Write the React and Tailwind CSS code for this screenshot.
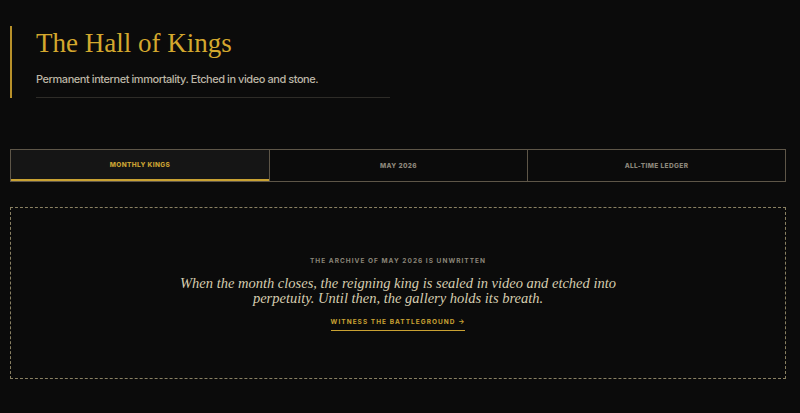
import React from 'react'

const tabs = ['Monthly Kings', 'May 2026', 'All-Time Ledger']

export default function App() {
  return (
    <div className="min-h-[413px] bg-[#0b0b0b] pl-[10px] pr-[14px] pt-[26px] pb-8" style={{ fontFamily: 'Inter, "Liberation Sans", sans-serif' }}>
      <header className="border-l-2 border-[#b8912a] pl-[24px] pt-[1px]">
        <h1 className="text-[27px] leading-[32px] text-[#d4a82e]" style={{ fontFamily: '"Liberation Serif", serif' }}>
          The Hall of Kings
        </h1>
        <p className="mt-[13px] text-[11px] font-medium leading-[14px] tracking-[-0.04em] text-[#bdb6a6]">
          Permanent internet immortality. Etched in video and stone.
        </p>
        <div className="mt-[11px] h-px w-[354px] bg-[#2e2c28]" />
      </header>

      <nav className="mt-[51px] grid grid-cols-3 border border-[#5e5648]">
        {tabs.map((t, i) => (
          <button
            key={t}
            className={
              'h-[31px] pt-[2px] text-[6.5px] font-extrabold uppercase tracking-[0.06em] ' +
              (i > 0 ? 'border-l border-[#5e5648] ' : '') +
              (i === 0 ? 'bg-[#151515] text-[#c9a233] border-b-2 border-b-[#c9a233]' : 'text-[#8d877b]')
            }
          >
            {t}
          </button>
        ))}
      </nav>

      <section className="mt-[25px] flex h-[172px] flex-col items-center justify-center border border-dashed border-[#8a8163] pt-[2px] text-center">
        <div className="text-[6.5px] font-bold uppercase tracking-[0.16em] text-[#8a8578]">
          The archive of May 2026 is unwritten
        </div>
        <p className="mt-[9px] w-[450px] text-[14.5px] italic leading-[15px] text-[#d6cdb0]" style={{ fontFamily: '"Liberation Serif", serif' }}>
          When the month closes, the reigning king is sealed in video and etched into perpetuity. Until then, the gallery holds its breath.
        </p>
        <a href="#" className="mt-[12px] border-b border-[#c9a233] pb-[2px] text-[6.5px] font-bold uppercase tracking-[0.16em] text-[#c9a233]">
          Witness the battleground →
        </a>
      </section>
    </div>
  )
}
